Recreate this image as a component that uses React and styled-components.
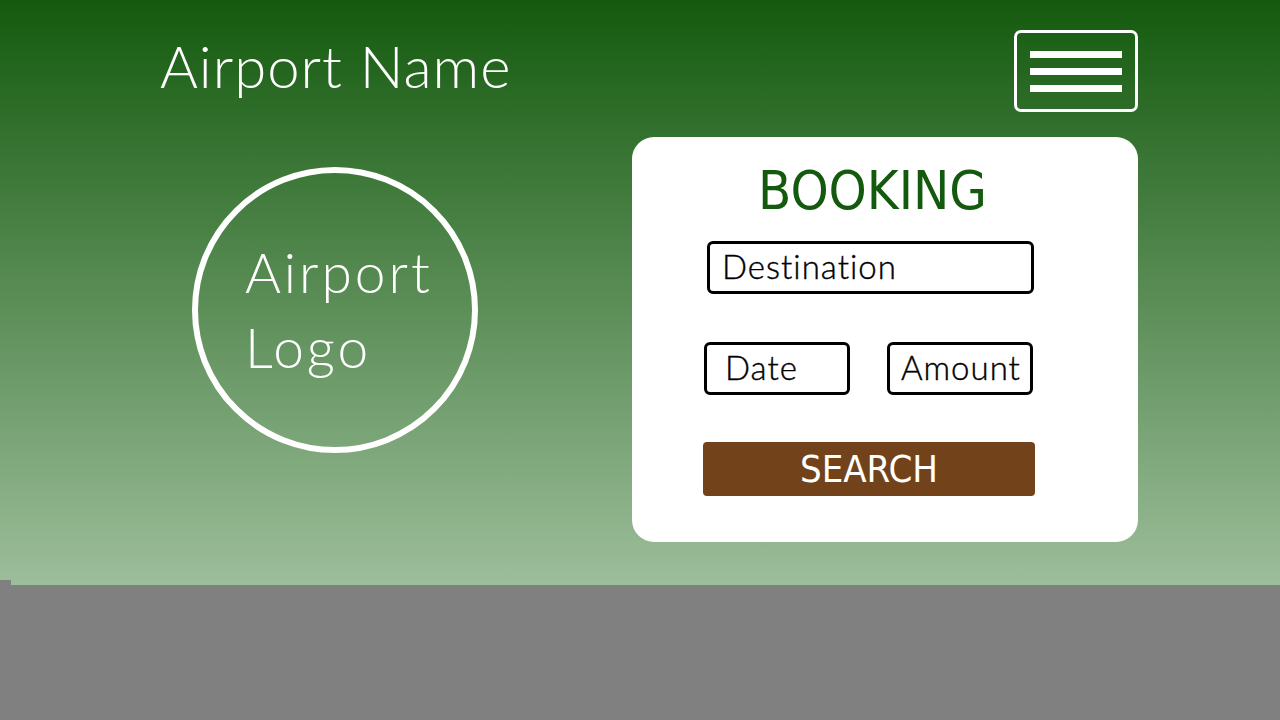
import React from 'react';
import styled, { createGlobalStyle } from 'styled-components';

const GlobalStyle = createGlobalStyle`
  html, body {
    margin: 0;
    padding: 0;
    background: #808080;
    font-family: Lato, "Noto Sans", sans-serif;
  }
`

export default function App () {
  return (
    <>
      <GlobalStyle />
      <Hero>
        <Inner>
          <Header>
            <SiteName>Airport Name</SiteName>
            <MenuButton aria-label="menu">
              <MenuLine />
              <MenuLine />
              <MenuLine />
            </MenuButton>
          </Header>
          <Main>
            <LogoCircle>
              <LogoText>Airport<br />Logo</LogoText>
            </LogoCircle>
            <BookingCard>
              <BookingTitle>BOOKING</BookingTitle>
              <Field width="327px" offset="75px">Destination</Field>
              <FieldRow>
                <Field width="146px" offset="0" pad="18px">Date</Field>
                <Field width="146px" offset="0" pad="11px">Amount</Field>
              </FieldRow>
              <SearchButton>SEARCH</SearchButton>
            </BookingCard>
          </Main>
        </Inner>
      </Hero>
      <Footer />
    </>
  );
}

const Hero = styled.div`
  height: 585px;
  background: linear-gradient(to bottom, #145a0e 0%, #9dbe9b 100%);
  overflow: hidden;
`

const Inner = styled.div`
  padding: 30px 142px 0 160px;
`

const Header = styled.header`
  display: flex;
  justify-content: space-between;
  align-items: flex-start;
`

const SiteName = styled.h1`
  margin: 7px 0 0;
  font-weight: 300;
  font-size: 58px;
  line-height: 58px;
  color: white;
  letter-spacing: 1px;
`

const MenuButton = styled.button`
  display: flex;
  flex-direction: column;
  justify-content: center;
  align-items: center;
  gap: 10px;
  width: 124px;
  height: 82px;
  border: 3px solid white;
  border-radius: 7px;
  background: transparent;
  padding: 0;
`

const MenuLine = styled.span`
  display: block;
  width: 92px;
  height: 7px;
  background: white;
`

const Main = styled.main`
  display: flex;
  align-items: flex-start;
  margin-top: 25px;
`

const LogoCircle = styled.div`
  box-sizing: border-box;
  width: 286px;
  height: 286px;
  margin: 30px 0 0 32px;
  border: 6px solid white;
  border-radius: 50%;
  display: flex;
  align-items: center;
  padding-left: 47px;
`

const LogoText = styled.div`
  font-weight: 300;
  font-size: 55px;
  line-height: 75px;
  color: white;
  letter-spacing: 3px;
`

const BookingCard = styled.section`
  box-sizing: border-box;
  margin-left: auto;
  width: 506px;
  height: 405px;
  background: white;
  border-radius: 22px;
  display: flex;
  flex-direction: column;
  align-items: flex-start;
  padding-top: 22px;
`

const BookingTitle = styled.h2`
  margin: 0 0 0 126px;
  font-family: "DejaVu Sans Condensed", "DejaVu Sans", sans-serif;
  font-weight: normal;
  font-size: 54px;
  line-height: 64px;
  color: #145a0e;
`

const Field = styled.div`
  box-sizing: border-box;
  width: ${p => p.width};
  height: 53px;
  margin-left: ${p => p.offset};
  margin-top: 18px;
  border: 3px solid black;
  border-radius: 6px;
  padding: 0 0 4px ${p => p.pad || '12px'};
  display: flex;
  align-items: center;
  font-size: 33px;
  font-weight: 300;
  letter-spacing: 1px;
  color: black;
  -webkit-text-stroke: 0.4px black;
`

const FieldRow = styled.div`
  display: flex;
  gap: 37px;
  margin: 48px 0 0 72px;
  & > div { margin-top: 0; }
`

const SearchButton = styled.button`
  width: 332px;
  height: 54px;
  margin: 47px 0 0 71px;
  border: none;
  border-radius: 4px;
  background: #72431a;
  color: white;
  font-family: "DejaVu Sans Condensed", "DejaVu Sans", sans-serif;
  font-weight: 200;
  font-size: 38px;
  padding: 0;
`

const Footer = styled.footer`
  position: relative;
  height: 135px;
  background: #808080;
  &::before {
    content: "";
    position: absolute;
    left: 0;
    top: -5px;
    width: 11px;
    height: 5px;
    background: #808080;
  }
`
